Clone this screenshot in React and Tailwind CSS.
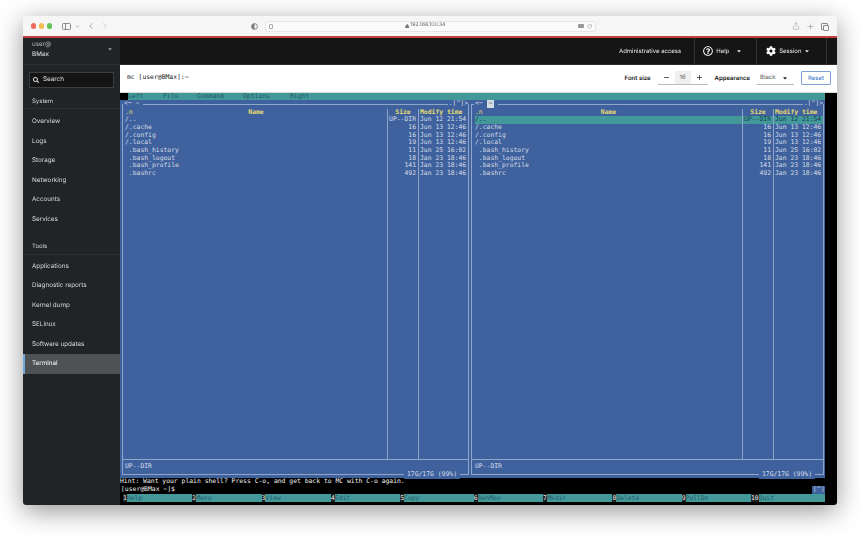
import React from "react";
import { FaSearch, FaCog, FaCaretDown, FaRegQuestionCircle } from "react-icons/fa";
import { ChevronLeft, ChevronRight, Plus, Minus, RotateCw, Lock, Share, ChevronDown } from "lucide-react";

const files = [
  ["/..", "UP--DIR", "Jun 12 21:54"],
  ["/.cache", "16", "Jun 13 12:46"],
  ["/.config", "16", "Jun 13 12:46"],
  ["/.local", "19", "Jun 13 12:46"],
  [" .bash_history", "11", "Jun 25 16:02"],
  [" .bash_logout", "18", "Jan 23 18:46"],
  [" .bash_profile", "141", "Jan 23 18:46"],
  [" .bashrc", "492", "Jan 23 18:46"],
];

const fnKeys = [
  ["1", "Help", "w-[69.3px]"],
  ["2", "Menu", "w-[69.3px]"],
  ["3", "View", "w-[69.3px]"],
  ["4", "Edit", "w-[69.3px]"],
  ["5", "Copy", "w-[73.6px]"],
  ["6", "RenMov", "w-[69.3px]"],
  ["7", "Mkdir", "w-[69.3px]"],
  ["8", "Delete", "w-[69.3px]"],
  ["9", "PullDn", "w-[69.3px]"],
  ["10", "Quit", "flex-1"],
];

function Cell({ children, selected, className = "" }) {
  return (
    <div className={`h-[7.68px] whitespace-pre ${selected ? "bg-[#43989a] text-[#143c50]" : ""} ${className}`}>
      {children}
    </div>
  );
}

function Panel({ right }) {
  return (
    <div className={`relative flex flex-col bg-[#3f629f] pb-[3px] pt-[4px] ${right ? "w-[355px] pl-[1px] pr-[1px]" : "w-[350px] pl-[2px] pr-[1px]"}`}>
      <div className="flex min-h-0 flex-1 flex-col border border-[#8fa6cb]">
        <div className={`flex min-h-0 flex-1 pt-[3.5px] ${right ? "pl-[2px]" : ""}`}>
          <div className={`border-r border-[#8fa6cb] ${right ? "w-[269px] pl-[1px]" : "w-[265px] pl-[2px]"}`}>
            <Cell className="relative text-[#e6dc6e]">
              .n<span className="absolute left-0 right-0 text-center font-bold">Name</span>
            </Cell>
            {files.map((f, i) => (
              <Cell key={f[0]} selected={right && i === 0}>{f[0]}</Cell>
            ))}
          </div>
          <div className="w-[31px] border-r border-[#8fa6cb]">
            <Cell className="text-center font-bold text-[#e6dc6e]">Size</Cell>
            {files.map((f, i) => (
              <Cell key={f[0]} selected={right && i === 0} className="pr-[2px] text-right">{f[1]}</Cell>
            ))}
          </div>
          <div className="flex-1">
            <Cell className="pl-[1px] font-bold text-[#e6dc6e]">Modify time</Cell>
            {files.map((f, i) => (
              <Cell key={f[0]} selected={right && i === 0} className="pl-[1px]">{f[2]}</Cell>
            ))}
          </div>
        </div>
        <div className={`h-[15px] border-t border-[#8fa6cb] pt-[3px] leading-[7.68px] ${right ? "pl-[3px]" : "pl-[2px]"}`}>UP--DIR</div>
      </div>
      <div className={`absolute top-0 flex h-[7.68px] items-center whitespace-pre bg-[#3f629f] pl-[1px] ${right ? "left-[4px]" : "left-[3px]"}`}>
        <span>{"<─ "}</span>
        {right ? <span className="bg-[#d5dbe2] px-[2px] text-[#28496f]">~</span> : <span>~</span>}
        <span>{" "}</span>
      </div>
      <div className="absolute right-[2px] top-0 h-[7.68px] bg-[#3f629f] pl-[1px] whitespace-pre">{".[^]>"}</div>
      <div className="absolute bottom-[-0.5px] right-[10px] h-[7.68px] bg-[#3f629f] px-[3px] whitespace-pre">17G/17G (99%)</div>
    </div>
  );
}

function NavItem({ children, active }) {
  return (
    <div className={`flex h-[19.5px] items-center ${active ? "border-l-2 border-[#73a5d8] bg-[#4f5255] pl-[7px] text-white" : "pl-[9px]"}`}>
      {children}
    </div>
  );
}

function Chrome() {
  return (
    <div className="flex h-[20px] items-center bg-[#f6f6f6] pl-[7.5px] pr-[9px] text-[#8a8a8a]">
      <div className="flex gap-[2.5px]">
        <span className="h-[5.5px] w-[5.5px] rounded-full bg-[#ee6a5f]" />
        <span className="h-[5.5px] w-[5.5px] rounded-full bg-[#f5bd4f]" />
        <span className="h-[5.5px] w-[5.5px] rounded-full bg-[#61c454]" />
      </div>
      <div className="ml-[10px] flex h-[7px] w-[9px] rounded-[1.5px] border border-[#8a8a8a]">
        <span className="w-[3px] border-r border-[#8a8a8a]" />
      </div>
      <ChevronDown size={5} className="ml-[3.5px]" strokeWidth={3} />
      <ChevronLeft size={10} className="ml-[6px]" strokeWidth={1.6} />
      <ChevronRight size={10} className="ml-[4.5px] text-[#b5b5b5]" strokeWidth={1.6} />
      <svg width="7" height="7" viewBox="0 0 10 10" className="ml-[141px]">
        <circle cx="5" cy="5" r="4.2" fill="none" stroke="#777" strokeWidth="1.2" />
        <path d="M5 1a4 4 0 0 0 0 8z" fill="#777" />
      </svg>
      <div className="ml-[6.5px] flex h-[11px] w-[331px] items-center rounded-[3px] border border-[#e6e6e6] bg-[#fbfbfb] pl-[3px] pr-[3px] font-['Inter',sans-serif] text-[5.2px] text-[#666]">
        <span className="h-[5px] w-[4px] rounded-[1px] border border-[#aaa]" />
        <div className="flex flex-1 items-center justify-center gap-[1px]">
          <Lock size={4.5} fill="#777" stroke="#777" />
          <span>192.168.100.34</span>
        </div>
        <span className="mr-[2px] h-[4px] w-[6px] rounded-[1px] bg-[#999]" />
        <RotateCw size={5} strokeWidth={1.6} className="ml-[1px]" />
      </div>
      <div className="ml-auto flex items-center gap-[6px]">
        <Share size={8} strokeWidth={1.4} />
        <Plus size={9} strokeWidth={1.4} />
        <div className="relative h-[7px] w-[7px] rounded-[1px] border border-[#8a8a8a]">
          <span className="absolute left-[1px] top-[1px] h-[6px] w-[6px] rounded-[1px] border border-[#8a8a8a] bg-[#f6f6f6]" />
        </div>
      </div>
    </div>
  );
}

export default function App() {
  return (
    <div className="h-[535px] w-[860px] overflow-hidden bg-white pl-[23px] pt-[16px]">
      <div className="flex h-[489px] w-[814px] flex-col overflow-hidden rounded-t-[4px] rounded-b-[3px] shadow-[0_6px_26px_rgba(0,0,0,0.42)] blur-[0.3px] [text-rendering:geometricPrecision]">
        <Chrome />
        <div className="h-[2px] bg-[#c4403a]" />
        <div className="flex min-h-0 flex-1 font-['Inter',sans-serif] text-[6.3px]">
          <aside className="flex w-[97px] shrink-0 flex-col bg-[#212427] text-[#d8d8d8]">
            <div className="relative h-[27px] border-b border-[#2c2f32] pl-[9px] pt-[0.5px] leading-[10px]">
              <div className="text-[#b0b0b0]">user@</div>
              <div className="font-medium">BMax</div>
              <FaCaretDown size={6} className="absolute right-[7px] top-[8px] text-[#999]" />
            </div>
            <div className="mx-[6px] mt-[7px] flex h-[16px] items-center gap-[4px] border border-[#3c3f42] bg-[#151515] pl-[3px] text-[#e0e0e0]">
              <FaSearch size={6} />
              Search
            </div>
            <div className="mt-[8px] flex h-[13px] items-center border-b border-[#2c2f32] pb-[1px] pl-[9px] text-[6px] text-[#d0d0d0]">System</div>
            <div className="mt-[3px]">
              {["Overview", "Logs", "Storage", "Networking", "Accounts", "Services"].map((n) => (
                <NavItem key={n}>{n}</NavItem>
              ))}
            </div>
            <div className="mt-[11.5px] flex h-[14px] items-center border-b border-[#2c2f32] pb-[1px] pl-[9px] text-[6px] text-[#d0d0d0]">Tools</div>
            <div className="mt-[2px]">
              {["Applications", "Diagnostic reports", "Kernel dump", "SELinux", "Software updates"].map((n) => (
                <NavItem key={n}>{n}</NavItem>
              ))}
              <NavItem active>Terminal</NavItem>
            </div>
          </aside>
          <main className="flex min-w-0 flex-1 flex-col">
            <header className="flex h-[27px] items-center border-b border-[#2c2c2c] bg-[#151515] text-[6px] text-[#e8e8e8]">
              <span className="ml-[499px]">Administrative access</span>
              <div className="ml-[13px] flex h-full w-[62px] items-center border-l border-[#333] pl-[8px]">
                <FaRegQuestionCircle size={10} className="text-white" />
                <span className="ml-[3px]">Help</span>
                <FaCaretDown size={6} className="ml-[7px]" />
              </div>
              <div className="flex h-full w-[71px] items-center border-x border-[#333] pl-[9px]">
                <FaCog size={10} className="text-white" />
                <span className="ml-[3px]">Session</span>
                <FaCaretDown size={6} className="ml-[3px]" />
              </div>
            </header>
            <div className="flex h-[27.5px] items-center border-b border-[#d8d8d8] bg-white pl-[7px] text-[6px] text-[#151515]">
              <span className="font-['DejaVu_Sans_Mono',monospace] text-[6.4px]">mc [user@BMax]:~</span>
              <span className="ml-auto font-semibold">Font size</span>
              <div className="ml-[7px] flex h-[14px] w-[50px] items-center justify-between border-b border-[#bbb]">
                <Minus size={7} strokeWidth={2.4} className="ml-[5px]" />
                <span className="flex h-full w-[16px] items-center justify-center bg-[#f0f0f0] text-[#555]">16</span>
                <Plus size={7} strokeWidth={2.4} className="mr-[5px]" />
              </div>
              <span className="ml-[7px] font-semibold">Appearance</span>
              <div className="ml-[7px] flex h-[14px] w-[37px] items-center justify-between border-b border-[#bbb] pl-[3px] pr-[6px] text-[#555]">
                Black
                <FaCaretDown size={6} className="text-[#151515]" />
              </div>
              <div className="ml-[7px] mr-[6px] flex h-[14px] w-[30px] items-center justify-center rounded-[1px] border border-[#7f9fd8] text-[#2f6fc9]">Reset</div>
            </div>
            <div className="flex min-h-0 flex-1 flex-col bg-black font-['DejaVu_Sans_Mono',monospace] text-[6.4px] leading-[7.68px] text-[#d6dce4]">
              <div className="flex h-[7.5px] w-[705px] shrink-0 bg-[#43989a] text-[#235a68]">
                <span className="h-full w-[8px] bg-black" />
                <div className="relative flex-1">
                  <span className="absolute left-0 top-[0.5px]">Left</span>
                  <span className="absolute left-[35px] top-[0.5px]">File</span>
                  <span className="absolute left-[69px] top-[0.5px]">Command</span>
                  <span className="absolute left-[115px] top-[0.5px]">Options</span>
                  <span className="absolute left-[162px] top-[0.5px]">Right</span>
                </div>
              </div>
              <div className="flex min-h-0 w-[705px] flex-1">
                <Panel />
                <Panel right />
              </div>
              <div className="h-[7.68px] whitespace-pre text-[#f0f0f0]">Hint: Want your plain shell? Press C-o, and get back to MC with C-o again.</div>
              <div className="relative h-[7.68px] w-[705px] whitespace-pre pl-[1px] text-[#f0f0f0]">
                [user@BMax ~]$
                <span className="absolute right-0 top-0 bg-[#3f629f] px-[0.5px] text-[#cfd6df]">[^]</span>
              </div>
              <div className="mb-[3.5px] ml-[3px] flex h-[8px] w-[702px] leading-[8.5px]">
                {fnKeys.map(([k, l, w]) => (
                  <div key={k} className={`flex bg-[#43989a] text-[#235a68] ${w}`}>
                    <span className="bg-[#222] text-[#e8e8e8]">{k}</span>
                    <span>{l}</span>
                  </div>
                ))}
              </div>
            </div>
          </main>
        </div>
      </div>
    </div>
  );
}
